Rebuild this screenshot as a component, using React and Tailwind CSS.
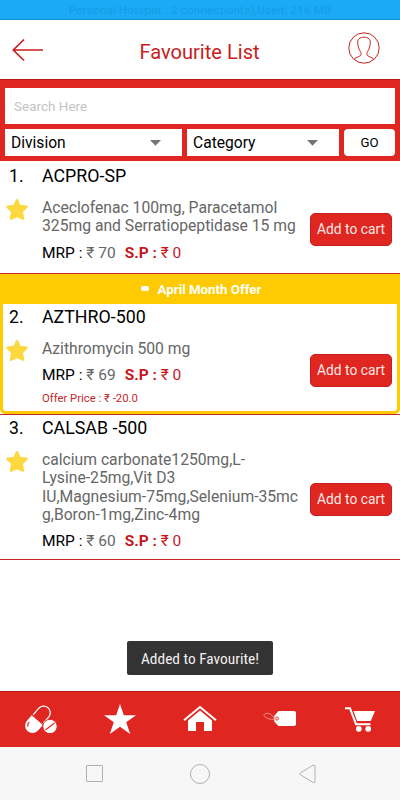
import React from 'react';

const products = [
  {
    id: 1,
    name: 'ACPRO-SP',
    lines: ['Aceclofenac 100mg, Paracetamol', '325mg and Serratiopeptidase 15 mg'],
    mrp: 70,
    sp: 0,
  },
  {
    id: 2,
    name: 'AZTHRO-500',
    lines: ['Azithromycin 500 mg'],
    mrp: 69,
    sp: 0,
    offer: 'April Month Offer',
    offerPrice: '-20.0',
  },
  {
    id: 3,
    name: 'CALSAB -500',
    lines: ['calcium carbonate1250mg,L-', 'Lysine-25mg,Vit D3', 'IU,Magnesium-75mg,Selenium-35mc', 'g,Boron-1mg,Zinc-4mg'],
    mrp: 60,
    sp: 0,
  },
];

const rowStyles = {
  1: { height: 'h-[111px]', pad: 'pt-[3px]', button: 'mt-[48px]' },
  2: { height: 'h-[107px]', pad: 'pt-[2px]', button: 'mt-[48px]' },
  3: { height: 'h-[144px]', pad: 'pt-[2px]', button: 'mt-[66px]' },
};

function StarBadge() {
  return (
    <svg className="w-[24px] h-[23px]" viewBox="0 0 24 23">
      <path
        d="M12 2.3 L14.5 8.1 L21.4 8.9 L16.6 13.6 L18 20.6 L12 17.8 L6 20.6 L7.4 13.6 L2.6 8.9 L9.5 8.1 Z"
        fill="#fdd83f"
        stroke="#fdd83f"
        strokeWidth="2.6"
        strokeLinejoin="round"
      />
    </svg>
  );
}

function Header() {
  return (
    <header className="h-[59px] flex items-center justify-between pl-[12px] pr-[20px] bg-white">
      <svg className="w-[32px] h-[24px]" viewBox="0 0 32 24" fill="none" stroke="#c8211d" strokeWidth="1.7">
        <path d="M31 12 H1.5 M12 1.5 L1.3 12 L12 22.5" />
      </svg>
      <h1 className="text-[20.1px] leading-[24px] text-[#c8211d] whitespace-nowrap pt-[4px] pl-[7px]">Favourite List</h1>
      <svg className="w-[32px] h-[32px] -mt-[4px]" viewBox="0 0 32 32" fill="none" stroke="#c8211d" strokeWidth="1">
        <circle cx="16" cy="16" r="15.2" />
        <path d="M6 27.3 C8 25.2 11.5 24.8 12.7 23.3 C13.2 22.5 13.3 20.5 12.3 19.3 C10.8 17.6 10.2 14.5 9.8 12 C9 7.2 12 5.2 16 5.2 C20 5.2 23 7.2 22.2 12 C21.8 14.5 21.2 17.6 19.7 19.3 C18.7 20.5 18.8 22.5 19.3 23.3 C20.5 24.8 24 25.2 26 27.3" />
      </svg>
    </header>
  );
}

function Select({ label, className }) {
  return (
    <div className={`h-[27px] bg-white flex items-center justify-between text-[15.6px] text-black pt-[3px] ${className}`}>
      <span>{label}</span>
      <svg className="w-[11px] h-[6px] -mt-[2px]" viewBox="0 0 11 6">
        <path d="M0 0 H11 L5.5 5.8 Z" fill="#757575" />
      </svg>
    </div>
  );
}

function SearchPanel() {
  return (
    <section className="h-[82px] bg-[#df2621] border-t border-[#b51d1a] pt-[8px] px-[5px]">
      <div className="h-[36px] bg-white flex items-center pl-[9px] pt-px text-[13.5px] text-[#c4c4c4]">Search Here</div>
      <div className="flex mt-[5px]">
        <Select label="Division" className="w-[177px] pl-[6px] pr-[21px]" />
        <Select label="Category" className="w-[152px] ml-[5px] pl-[6px] pr-[21px]" />
        <button className="w-[51px] h-[27px] ml-[5px] bg-white rounded-[4px] text-[13.2px] text-black pt-px">GO</button>
      </div>
    </section>
  );
}

function ProductRow({ product, inset }) {
  const s = rowStyles[product.id];
  return (
    <div className={`flex bg-white ${s.height} ${s.pad} ${inset ? 'rounded-b-[3px]' : 'px-[3px]'}`}>
      <div className="w-[39px] shrink-0">
        <div className="text-[17.6px] leading-[22px] pl-[6px] text-black">{product.id}.</div>
        <div className="mt-[11px] pl-[2px]">
          <StarBadge />
        </div>
      </div>
      <div className="w-[267px] shrink-0 whitespace-nowrap">
        <div className="text-[17.8px] leading-[22px] text-black">{product.name}</div>
        <div className="mt-[12px] text-[15.7px] leading-[18.3px] text-[#666]">
          {product.lines.map((line) => (
            <div key={line}>{line}</div>
          ))}
        </div>
        <div className="mt-[8px] flex text-[15.5px] leading-[18px]">
          <span className="text-black">MRP :&nbsp;</span>
          <span className="text-[#666]">₹ {product.mrp}</span>
          <span className="ml-[9px] font-bold text-[#c8161d]">S.P :&nbsp;</span>
          <span className="text-[#c8161d]">₹ {product.sp}</span>
        </div>
        {product.offerPrice && (
          <div className="mt-[8px] text-[11.3px] leading-[14px] text-[#c0282d]">Offer Price : ₹ {product.offerPrice}</div>
        )}
      </div>
      <button className={`w-[82px] h-[33px] shrink-0 ml-px pb-px rounded-[5px] bg-[#df2621] border border-[#c8211d] text-[13.8px] leading-[18px] text-[#ffe9e4] whitespace-nowrap ${s.button}`}>
        Add to cart
      </button>
    </div>
  );
}

function OfferCard({ product }) {
  return (
    <div className="h-[140px] bg-[#fecb02] px-[3px] rounded-b-[5px]">
      <div className="h-[30px] flex items-center justify-center pl-[2px] pt-px text-white">
        <span className="w-[8px] h-[5px] -mt-[2px] rounded-[2px] bg-white mr-[9px]" />
        <span className="text-[13.3px] font-bold">{product.offer}</span>
      </div>
      <ProductRow product={product} inset />
    </div>
  );
}

function BottomNav() {
  return (
    <nav className="h-[56px] bg-[#df2621] border-t border-[#b51d1a] grid grid-cols-5 place-items-center">
      <svg className="w-[36px] h-[32px]" viewBox="0 0 36 32">
        <g transform="rotate(41 14 16)">
          <path d="M8.4 14 V5.5 A6.6 6.6 0 0 1 21.6 5.5 V14" fill="none" stroke="#fff" strokeWidth="1.3" />
          <path d="M7.6 15.2 H22.4 V22.5 A7.4 7.4 0 0 1 7.6 22.5 Z" fill="#fff" />
          <path d="M10.3 22 V23.2 A4 4 0 0 0 12.2 26.3" fill="none" stroke="#df2621" strokeWidth="1.2" />
        </g>
        <circle cx="28" cy="22.5" r="7.2" fill="#fff" stroke="#df2621" strokeWidth="1" />
        <path d="M23.5 26 L32.5 19" stroke="#df2621" strokeWidth="1.2" />
      </svg>
      <svg className="w-[34px] h-[32px] -mt-px" viewBox="0 0 34 32">
        <path d="M17 1 L20.8 12.2 H33 L23.2 19.2 L27.2 31 L17 23.8 L6.8 31 L10.8 19.2 L1 12.2 H13.2 Z" fill="#fff" />
      </svg>
      <svg className="w-[34px] h-[28px] -mt-px" viewBox="0 0 34 28">
        <path d="M1 15.3 L17 2 L33 15.3" fill="none" stroke="#fff" strokeWidth="2" />
        <path d="M5 15.5 L17 5.6 L29 15.5 V26 H21 V17 H13 V26 H5 Z" fill="#fff" />
      </svg>
      <svg className="w-[34px] h-[20px] -mt-px" viewBox="0 0 34 20">
        <path d="M11.5 6.5 L15.5 2 H31 Q33 2 33 4 V15 Q33 17 31 17 H15.5 L11.5 13 Q10.3 9.5 11.5 6.5 Z" fill="#fff" />
        <circle cx="14" cy="9.5" r="1.5" fill="#fff" stroke="#df2621" strokeWidth="0.9" />
        <path d="M13.5 9.7 C10 11.5 2 9.5 1 6.5 C0.5 4 6 3.5 8.5 6 C9.8 7.5 10.5 8.8 13.5 9.7" fill="none" stroke="#f3a09b" strokeWidth="0.9" />
      </svg>
      <svg className="w-[32px] h-[28px]" viewBox="0 0 32 28">
        <path d="M1 2.3 H6 L12 18.2 H26.5" fill="none" stroke="#fff" strokeWidth="2" />
        <path d="M9.5 5 H31 L26.8 15 H13 Z" fill="#fff" />
        <circle cx="14.8" cy="22.8" r="2.9" fill="#fff" />
        <circle cx="24.2" cy="22.8" r="2.9" fill="#fff" />
      </svg>
    </nav>
  );
}

function SystemBar() {
  return (
    <div className="h-[53px] bg-[#f7f7f7] flex items-center justify-center pl-[2px]">
      <span className="w-[17px] h-[17px] border border-[#b0b0b0] rounded-[1px]" />
      <span className="w-[20px] h-[20px] ml-[87px] mr-[89px] border border-[#b0b0b0] rounded-full" />
      <svg className="w-[17px] h-[20px]" viewBox="0 0 17 20">
        <path d="M1.3 9 L14 1.2 Q16 .3 16 2.2 V17.5 Q16 19.5 14 18.4 L1.3 10.7 Q.3 9.8 1.3 9 Z" fill="none" stroke="#b0b0b0" />
      </svg>
    </div>
  );
}

export default function App() {
  return (
    <div className="relative w-[400px] h-[800px] flex flex-col overflow-hidden bg-white font-['Roboto',sans-serif]">
      <div className="h-[20px] bg-[#1baaf5] border-b border-[#168fcf] text-center text-[11.6px] leading-[21px] tracking-[0.2px] text-[#159ce5]">
        Personal Hotspot : 2 connection(s),Used: 216 MB
      </div>
      <Header />
      <SearchPanel />
      <main className="flex-1 pt-px">
        {products.map((product) => (
          <div key={product.id} className="border-b border-[#c22a2a]">
            {product.offer ? <OfferCard product={product} /> : <ProductRow product={product} />}
          </div>
        ))}
      </main>
      <div className="absolute left-[127px] top-[641px] w-[146px] h-[34px] rounded-[2px] bg-[#333] flex items-center justify-center pt-[3px] text-[15.4px] text-[#f0f0f0] whitespace-nowrap font-['Roboto_Condensed','Roboto',sans-serif]">
        Added to Favourite!
      </div>
      <BottomNav />
      <SystemBar />
    </div>
  );
}
